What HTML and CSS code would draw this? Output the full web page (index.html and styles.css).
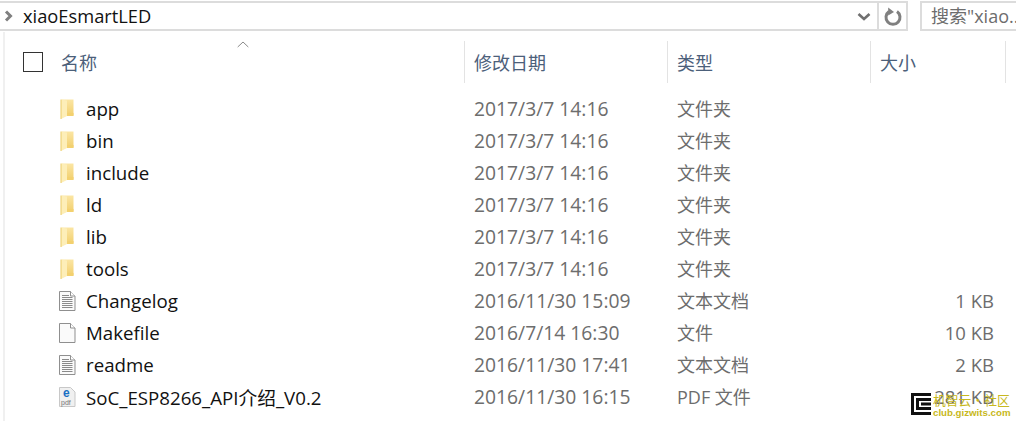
FILE: index.html
```html
<!DOCTYPE html>
<html lang="zh">
<head>
<meta charset="utf-8">
<title>xiaoEsmartLED</title>
<link rel="stylesheet" href="styles.css">
</head>
<body>
<div class="window">
  <div class="toolbar">
    <div class="address">
      <svg class="crumb" width="10" height="12" viewBox="0 0 10 12"><path d="M2 1.500l4.500 4.500-4.500 4.500" fill="none" stroke="#808080" stroke-width="3"/></svg>
      <span class="path">xiaoEsmartLED</span>
      <svg class="chev" width="14" height="10" viewBox="0 0 14 10"><path d="M1.500 2l5.500 5 5.500-5" fill="none" stroke="#707070" stroke-width="2.600"/></svg>
      <div class="refresh">
        <svg width="18" height="19" viewBox="0 0 18 19"><path d="M5 4.600A7 7 0 1 0 13 4.600" fill="none" stroke="#808080" stroke-width="3"/><path d="M4.200 .5l5.800 4.600-5.800 3.400z" fill="#808080"/></svg>
      </div>
    </div>
    <div class="search">搜索"xiao...</div>
  </div>
  <div class="pane">
    <div class="head">
      <div class="cell name-col">
        <span class="check"></span>
        <span class="head-label">名称</span>
        <svg class="sort" width="12" height="7" viewBox="0 0 12 7"><path d="M.7 6L6 1l5.300 5" fill="none" stroke="#8a8a8a" stroke-width="1"/></svg>
      </div>
      <div class="cell date-col sep"><span class="head-label">修改日期</span></div>
      <div class="cell type-col sep"><span class="head-label">类型</span></div>
      <div class="cell size-col sep"><span class="head-label">大小</span></div>
    </div>
    <div class="rows">
      <div class="row"><div class="name-col item"><svg class="ico" width="17" height="20" viewBox="0 0 17 20"><use href="#folder"/></svg><span class="fname">app</span></div><div class="date-col meta">2017/3/7 14:16</div><div class="type-col meta">文件夹</div><div class="size-col meta"></div></div>
      <div class="row"><div class="name-col item"><svg class="ico" width="17" height="20" viewBox="0 0 17 20"><use href="#folder"/></svg><span class="fname">bin</span></div><div class="date-col meta">2017/3/7 14:16</div><div class="type-col meta">文件夹</div><div class="size-col meta"></div></div>
      <div class="row"><div class="name-col item"><svg class="ico" width="17" height="20" viewBox="0 0 17 20"><use href="#folder"/></svg><span class="fname">include</span></div><div class="date-col meta">2017/3/7 14:16</div><div class="type-col meta">文件夹</div><div class="size-col meta"></div></div>
      <div class="row"><div class="name-col item"><svg class="ico" width="17" height="20" viewBox="0 0 17 20"><use href="#folder"/></svg><span class="fname">ld</span></div><div class="date-col meta">2017/3/7 14:16</div><div class="type-col meta">文件夹</div><div class="size-col meta"></div></div>
      <div class="row"><div class="name-col item"><svg class="ico" width="17" height="20" viewBox="0 0 17 20"><use href="#folder"/></svg><span class="fname">lib</span></div><div class="date-col meta">2017/3/7 14:16</div><div class="type-col meta">文件夹</div><div class="size-col meta"></div></div>
      <div class="row"><div class="name-col item"><svg class="ico" width="17" height="20" viewBox="0 0 17 20"><use href="#folder"/></svg><span class="fname">tools</span></div><div class="date-col meta">2017/3/7 14:16</div><div class="type-col meta">文件夹</div><div class="size-col meta"></div></div>
      <div class="row"><div class="name-col item"><svg class="ico" width="17" height="20" viewBox="0 0 17 20"><use href="#textdoc"/></svg><span class="fname">Changelog</span></div><div class="date-col meta">2016/11/30 15:09</div><div class="type-col meta">文本文档</div><div class="size-col meta">1 KB</div></div>
      <div class="row"><div class="name-col item"><svg class="ico" width="17" height="20" viewBox="0 0 17 20"><use href="#blankdoc"/></svg><span class="fname">Makefile</span></div><div class="date-col meta">2016/7/14 16:30</div><div class="type-col meta">文件</div><div class="size-col meta">10 KB</div></div>
      <div class="row"><div class="name-col item"><svg class="ico" width="17" height="20" viewBox="0 0 17 20"><use href="#textdoc"/></svg><span class="fname">readme</span></div><div class="date-col meta">2016/11/30 17:41</div><div class="type-col meta">文本文档</div><div class="size-col meta">2 KB</div></div>
      <div class="row"><div class="name-col item"><svg class="ico" width="17" height="20" viewBox="0 0 17 20"><use href="#pdfdoc"/></svg><span class="fname">SoC_ESP8266_API介绍_V0.2</span></div><div class="date-col meta">2016/11/30 16:15</div><div class="type-col meta">PDF 文件</div><div class="size-col meta">281 KB</div></div>
    </div>
  </div>
  <div class="watermark">
    <svg class="wm-logo" width="20" height="22" viewBox="0 0 20 22"><path d="M20 1.500H1.500v19H20M20 6.500H6.500v9H20M10 11h10" fill="none" stroke="#111" stroke-width="3"/></svg>
    <div class="wm-text"><span class="wm-top">机智云·社区</span><span class="wm-sub">club.gizwits.com</span></div>
  </div>
</div>
<svg class="defs" width="0" height="0">
  <defs>
    <linearGradient id="gold" x1="0" y1="0" x2="0" y2="1">
      <stop offset="0" stop-color="#fbe6a4"/>
      <stop offset="1" stop-color="#f2cf6e"/>
    </linearGradient>
    <g id="folder">
      <path d="M3 .5h11.500v16H3z" fill="url(#gold)"/>
      <path d="M2 .5L8 1.500v15.500L2 20z" fill="#fdeeb8"/>
      <path d="M2 .5V20" stroke="#ebcb68" stroke-width="1"/>
      <path d="M8 14h6.500v3H8z" fill="#f3d16f"/>
    </g>
    <g id="blankdoc">
      <path d="M.5.500h11l4.500 4.500v14.500H.5z" fill="#fafafa" stroke="#8f8f8f"/>
      <path d="M11.500 .5v4.500h4.500" fill="#fff" stroke="#8f8f8f"/>
    </g>
    <g id="textdoc">
      <use href="#blankdoc"/>
      <path d="M3 4.500h7M3 6.500h10.500M3 8.500h10.500M3 10.500h10.500M3 12.500h10.500M3 14.500h10.500M3 16.500h10.500" stroke="#8a8a8a" stroke-width="1"/>
    </g>
    <g id="pdfdoc">
      <path d="M.5.500h11l4.500 4.500v14.500H.5z" fill="#f0f0f0" stroke="#c8c8c8"/>
      <text x="4" y="10" font-family="Liberation Sans" font-size="12" font-weight="700" fill="#1a6fc4">e</text>
      <text x="2" y="17.500" font-family="Liberation Sans" font-size="7" fill="#777">pdf</text>
    </g>
  </defs>
</svg>
</body>
</html>
```
FILE: styles.css
```css
* { box-sizing: border-box; }
html, body { margin: 0; height: 100%; overflow: hidden; background: #fff; }
.window {
  position: relative;
  width: 1016px;
  height: 421px;
  font-family: "Open Sans", "Noto Sans CJK SC", sans-serif;
  overflow: hidden;
}
.defs { position: absolute; }
.toolbar { display: flex; padding-top: 1px; height: 32px; }
.address {
  width: 908px;
  height: 30px;
  display: flex;
  align-items: center;
  border-top: 2px solid #dcdcdc;
  border-bottom: 2px solid #dcdcdc;
  border-right: 2px solid #dcdcdc;
  padding-left: 4px;
}
.crumb { margin-right: 9px; flex: none; }
.path { font-size: 18.300px; color: #111; flex: 1; line-height: 26px; }
.chev { margin-right: 6px; flex: none; margin-top: 2px; }
.refresh {
  width: 29px;
  height: 100%;
  border-left: 2px solid #dcdcdc;
  display: flex;
  align-items: center;
  justify-content: center;
}
.search {
  margin-left: 12px;
  flex: 1;
  height: 30px;
  border: 2px solid #dcdcdc;
  border-right: 0;
  padding-left: 9px;
  font-size: 18px;
  line-height: 26px;
  color: #6d6d6d;
  white-space: nowrap;
  overflow: hidden;
}
.pane { margin-left: 3px; border-left: 2px solid #f0f0f0; height: 389px; padding-top: 9px; }
.head { display: flex; height: 42px; }
.cell { display: flex; align-items: center; position: relative; }
.sep { border-left: 1px solid #e3e3e3; padding-left: 9px; }
.head-label { font-size: 18px; color: #4c607a; font-family: "Noto Sans CJK SC", sans-serif; line-height: 24px; }
.name-col { width: 459px; flex: none; }
.date-col { width: 203px; flex: none; }
.type-col { width: 203px; flex: none; }
.size-col { width: 136px; flex: none; border-right: 1px solid #e3e3e3; }
.head .name-col { padding-left: 18px; }
.check { width: 20px; height: 20px; border: 1px solid #333; margin-right: 18px; flex: none; }
.sort { position: absolute; left: 232px; top: 0; }
.rows { padding-top: 10px; }
.row { display: flex; height: 32px; align-items: center; }
.item { display: flex; align-items: center; padding-left: 54px; }
.ico { flex: none; margin-right: 10px; }
.fname { font-size: 18.700px; color: #111; white-space: nowrap; padding-bottom: 2px; }
.meta { color: #6d6d6d; white-space: nowrap; padding-left: 10px; padding-bottom: 2px; font-size: 18px; }
.date-col.meta { font-size: 19.300px; }
.row .size-col { border-right: 0; width: 124px; padding-left: 0; text-align: right; font-size: 18.500px; }
.watermark {
  position: absolute;
  left: 911px;
  top: 393px;
  display: flex;
  gap: 2px;
}
.wm-logo { flex: none; }
.wm-text { display: flex; flex-direction: column; white-space: nowrap; }
.wm-top { font-size: 12.800px; line-height: 14px; color: #c8b820; font-family: "Noto Sans CJK SC", sans-serif; }
.wm-sub { font-size: 9.700px; line-height: 11px; font-weight: 700; color: #c8b820; font-family: "Liberation Sans", sans-serif; }
```
